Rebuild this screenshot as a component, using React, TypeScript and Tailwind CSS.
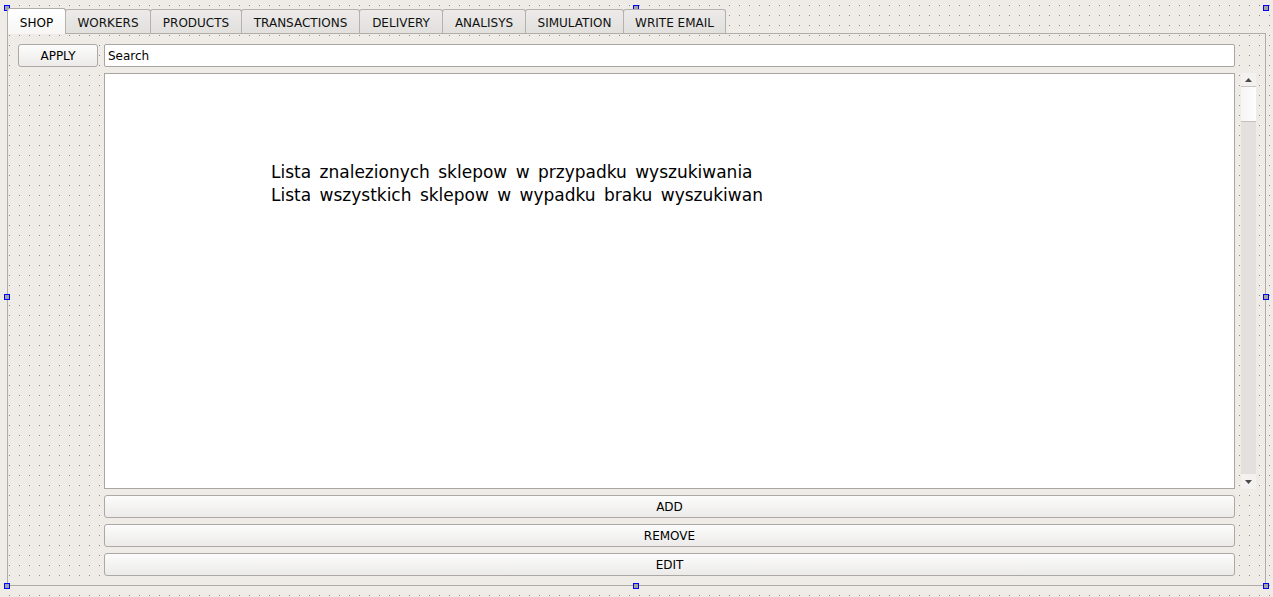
const tabs = [
  { name: "SHOP", w: "w-[59px]" },
  { name: "WORKERS", w: "w-[86px]" },
  { name: "PRODUCTS", w: "w-[92px]" },
  { name: "TRANSACTIONS", w: "w-[119px]" },
  { name: "DELIVERY", w: "w-[84px]" },
  { name: "ANALISYS", w: "w-[84px]" },
  { name: "SIMULATION", w: "w-[99px]" },
  { name: "WRITE EMAIL", w: "w-[103px]" },
];

const dots =
  "bg-[#8e8b87] [background-image:linear-gradient(90deg,#efebe7_9px,transparent_9px),linear-gradient(#efebe7_5px,transparent_5px,transparent_6px,#efebe7_6px)] [background-size:10px_10px]";

function Handle({ className }: { className: string }) {
  return <div className={"absolute w-[6px] h-[6px] bg-[#a3a3a3] border border-[#0000ff] " + className} />;
}

function Btn({ label }: { label: string }) {
  return (
    <button className="h-[23px] rounded-[3px] border border-[#aca8a3] bg-gradient-to-b from-[#fcfcfc] to-[#ecebe9] text-[12px] text-black leading-none">
      {label}
    </button>
  );
}

export default function App() {
  return (
    <div
      className={"relative w-[1273px] h-[597px] overflow-hidden pt-[8px] pl-[7px] " + dots}
      style={{ fontFamily: "'DejaVu Sans', 'Liberation Sans', sans-serif" }}
    >
      <div className="w-[1259px] h-[578px] flex flex-col">
        {/* tab bar */}
        <div className="flex items-end h-[25px] relative z-10">
          {tabs.map((t, i) =>
            i === 0 ? (
              <div
                key={t.name}
                className={t.w + " h-[26px] -mb-px pt-[2px] flex items-center justify-center border border-b-0 border-[#b0aca7] rounded-t-[3px] bg-gradient-to-b from-white to-[#f7f6f5] text-[12px] text-black"}
              >
                {t.name}
              </div>
            ) : (
              <div
                key={t.name}
                className={t.w + " h-[24px] -ml-px pt-[2px] flex items-center justify-center border border-b-0 border-[#b5b1ac] rounded-t-[3px] bg-gradient-to-b from-[#ecebe9] to-[#e2e0dd] text-[12px] text-[#111]"}
              >
                {t.name}
              </div>
            )
          )}
        </div>
        {/* pane */}
        <div className="w-[1259px] h-[553px] border border-[#b0aca7] pt-[10px] pl-[10px]">
          <div className="grid grid-cols-[80px_1131px_15px] grid-rows-[23px_416px_23px_23px_23px] gap-[6px]">
            <Btn label="APPLY" />
            <div className="h-[23px] rounded-[2px] border border-[#a9a5a0] bg-white flex items-center pl-[3px] text-[12px] text-black">
              Search
            </div>
            <div />
            <div />
            <div className="border border-[#a9a5a0] bg-white pl-[166px] pt-[87px] text-[17px] leading-[23px] [word-spacing:3px] text-black">
              <div>Lista znalezionych sklepow w przypadku wyszukiwania</div>
              <div>Lista wszystkich sklepow w wypadku braku wyszukiwan</div>
            </div>
            <div className="flex flex-col bg-[#e3e0dd]">
              <div className="h-[13px] bg-[#f4f2f0] flex items-center justify-center">
                <svg width="7" height="4" viewBox="0 0 7 4">
                  <path d="M3.5 0 L7 4 L0 4 Z" fill="#4a4a4a" />
                </svg>
              </div>
              <div className="h-[36px] border-t border-[#c9c6c2] bg-gradient-to-r from-[#f6f5f4] to-[#fdfdfd] border-b border-b-[#c4c1bd]" />
              <div className="flex-1" />
              <div className="h-[15px] bg-[#f4f2f0] flex items-center justify-center">
                <svg width="7" height="4" viewBox="0 0 7 4">
                  <path d="M0 0 L7 0 L3.5 4 Z" fill="#4a4a4a" />
                </svg>
              </div>
            </div>
            <div />
            <Btn label="ADD" />
            <div />
            <div />
            <Btn label="REMOVE" />
            <div />
            <div />
            <Btn label="EDIT" />
            <div />
          </div>
        </div>
      </div>
      <Handle className="left-[4px] top-[5px]" />
      <Handle className="left-[633px] top-[5px]" />
      <Handle className="left-[1263px] top-[5px]" />
      <Handle className="left-[4px] top-[294px]" />
      <Handle className="left-[1263px] top-[294px]" />
      <Handle className="left-[4px] top-[583px]" />
      <Handle className="left-[633px] top-[583px]" />
      <Handle className="left-[1263px] top-[583px]" />
    </div>
  );
}
